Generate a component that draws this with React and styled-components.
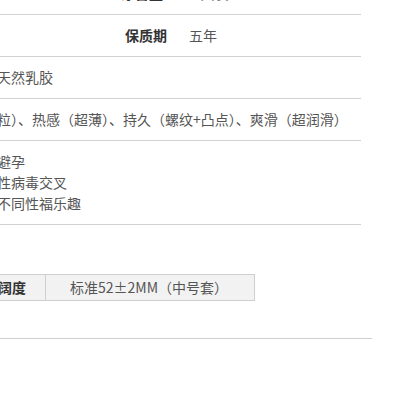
import React from "react";
import styled, { createGlobalStyle } from "styled-components";

const Global = createGlobalStyle`
  html, body { margin: 0; padding: 0; background: #fff; overflow: hidden; }
  body { font-family: "Noto Sans CJK SC", "Liberation Sans", sans-serif; font-size: 14px; color: #555; }
`;

const Page = styled.div`
  width: 364px;
  margin: -27px 0 0 -3px;
`;

const Row = styled.div`
  display: flex;
  align-items: center;
  gap: ${(p) => (p.$gap ? p.$gap : 0)}px;
  padding: 10px 0 10px ${(p) => (p.$indent ? p.$indent : 0)}px;
  line-height: 21px;
  border-bottom: 1px solid #d2d2d2;
`;

const Lines = styled.div`
  display: flex;
  flex-direction: column;
`;

const Label = styled.span`
  font-weight: bold;
  color: #333;
`;

const Value = styled.span`
  color: #555;
`;

const Spacer = styled.div`
  height: 49px;
`;

const Table = styled.div`
  display: grid;
  grid-template-columns: 47px 207px;
  width: 256px;
  background: #f2f2f2;
  border: 1px solid #cfcfcf;
  line-height: 25px;
`;

const Cell = styled.div`
  text-align: ${(p) => (p.$head ? "left" : "center")};
  padding-left: ${(p) => (p.$head ? "0" : "0")};
  border-left: ${(p) => (p.$head ? "none" : "1px solid #cfcfcf")};
  font-weight: ${(p) => (p.$head ? "bold" : "normal")};
  color: ${(p) => (p.$head ? "#333" : "#555")};
`;

const Rule = styled.div`
  margin-top: 37px;
  width: 375px;
  border-top: 1px solid #cfcfcf;
`;

export default function App() {
  return (
    <>
      <Global />
      <Page>
        <Row $indent={124} $gap={22}>
          <Label>净含量</Label>
          <Value>12只装</Value>
        </Row>
        <Row $indent={128} $gap={22}>
          <Label>保质期</Label>
          <Value>五年</Value>
        </Row>
        <Row>
          <Value>天然乳胶</Value>
        </Row>
        <Row>
          <Value>粒）、热感（超薄）、持久（螺纹+凸点）、爽滑（超润滑）</Value>
        </Row>
        <Row>
          <Lines>
            <Value>避孕</Value>
            <Value>性病毒交叉</Value>
            <Value>不同性福乐趣</Value>
          </Lines>
        </Row>
        <Spacer />
        <Table>
          <Cell $head>阔度</Cell>
          <Cell>标准52±2MM（中号套）</Cell>
        </Table>
        <Rule />
      </Page>
    </>
  );
}
